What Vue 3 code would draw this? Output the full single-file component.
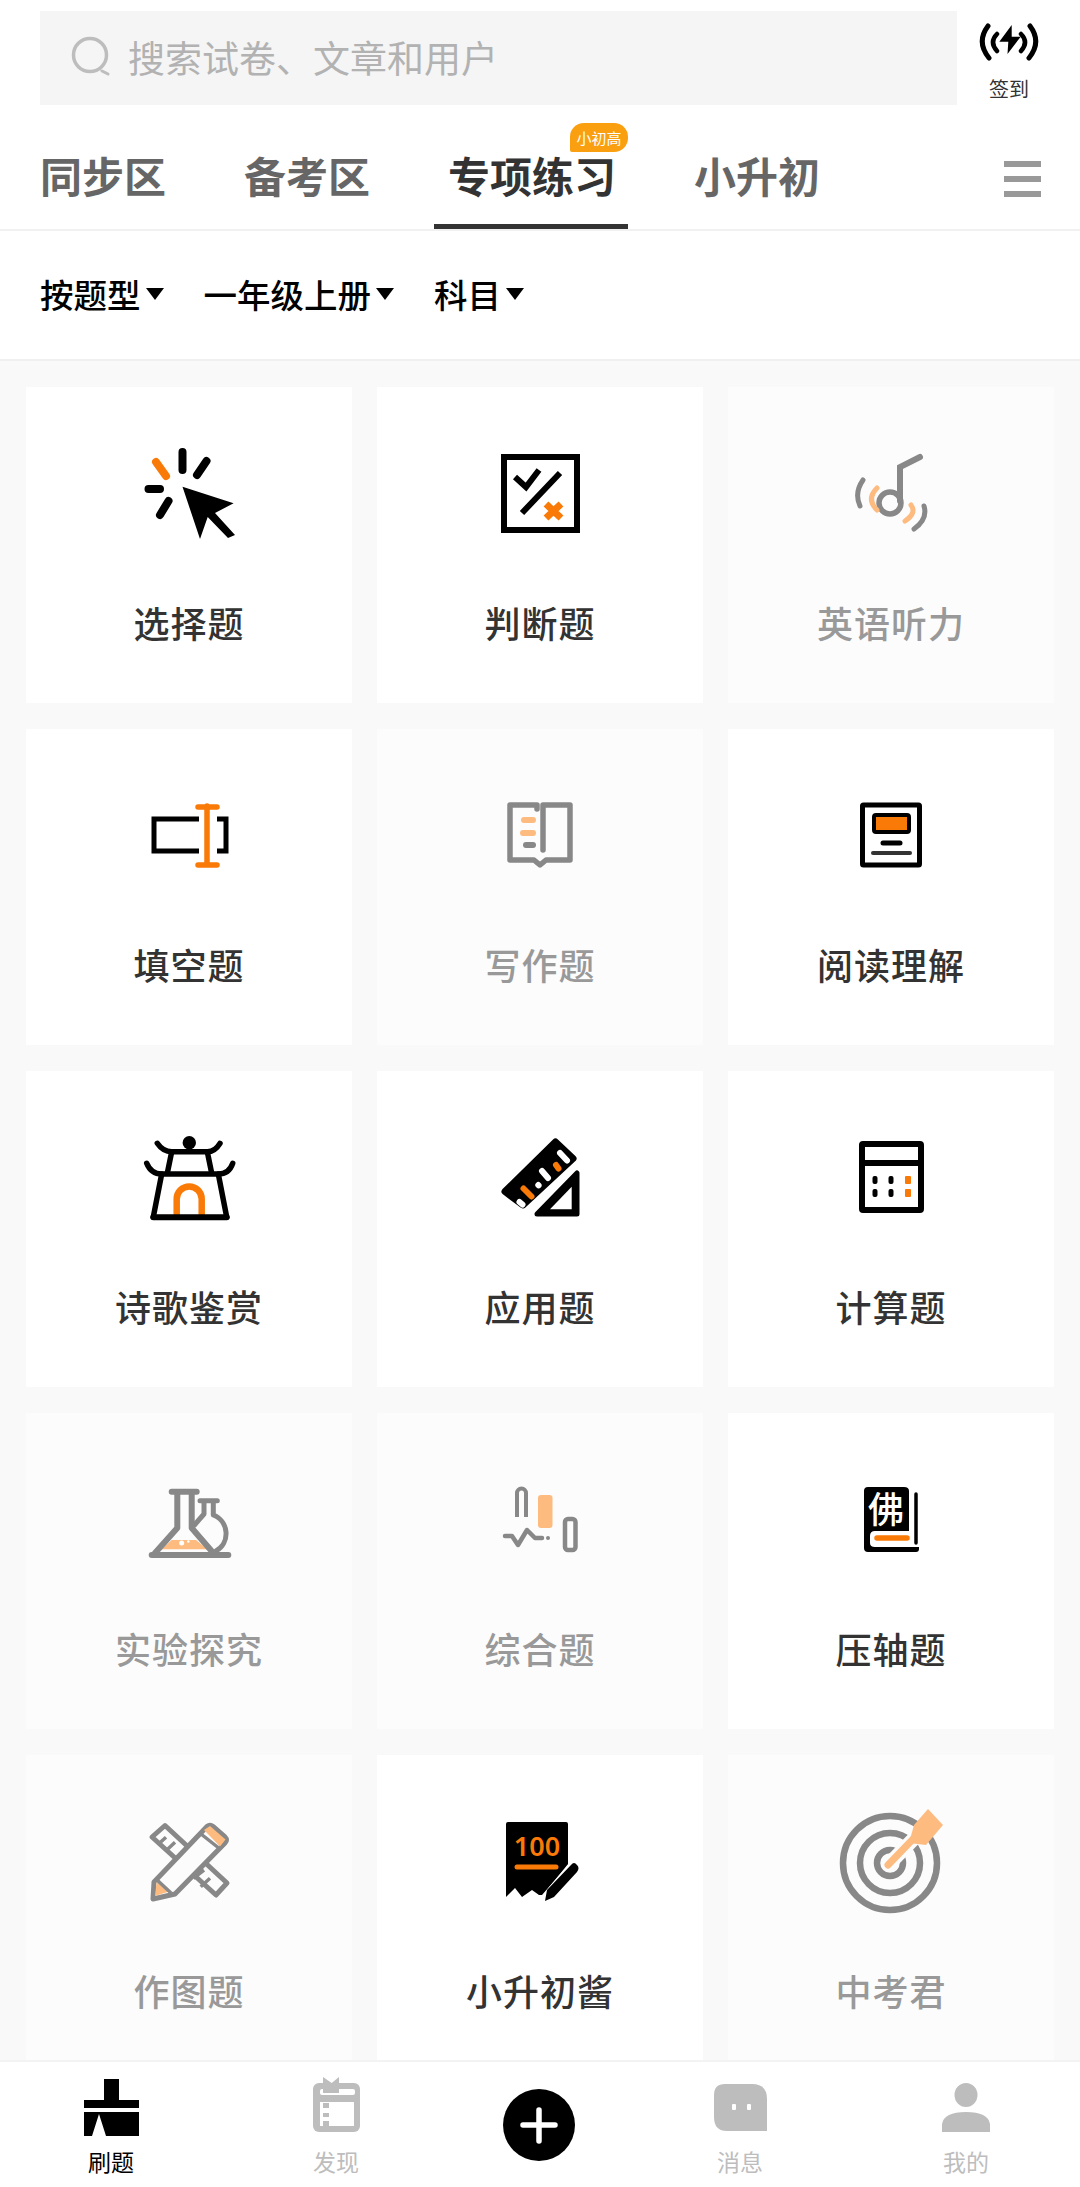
<template>
  <div class="page">
    <header class="search-row">
      <div class="search-box">
        <svg class="search-icon" width="42" height="42" viewBox="0 0 42 42">
          <circle cx="19" cy="19" r="16.5" fill="none" stroke="#bdbdbd" stroke-width="3.5" />
          <path d="M31 35l6 3" fill="none" stroke="#bdbdbd" stroke-width="3" stroke-linecap="round" />
        </svg>
        <span>搜索试卷、文章和用户</span>
      </div>
      <div class="sign-in">
        <svg width="60" height="38" viewBox="0 0 60 38">
          <path d="M9 3Q-3 19 10 35M51 3Q63 19 50 35" fill="none" stroke="#000" stroke-width="5" stroke-linecap="round" />
          <path d="M18 11Q10 19 18 28M42 11Q50 19 42 28" fill="none" stroke="#000" stroke-width="4.5" stroke-linecap="round" />
          <path d="M32.7 2L20.3 18.7H29.3L28.5 31 41.7 13.7H32.7z" fill="#000" />
        </svg>
        <span>签到</span>
      </div>
    </header>

    <nav class="tabs">
      <a class="tab" v-for="tab in tabs" :key="tab.name" :class="{ active: tab.active }">
        {{ tab.name }}
        <i v-if="tab.active" class="badge">小初高</i>
      </a>
      <div class="menu"><b></b><b></b><b></b></div>
    </nav>

    <div class="filters">
      <span class="filter" v-for="f in filters" :key="f">{{ f }}<i class="caret"></i></span>
    </div>

    <main class="content">
      <div class="grid">
        <div class="card">
          <svg class="ico" viewBox="0 0 100 100">
            <path d="M43.5 49.7L94.6 66.3 76 76 96 98 89 101 68.7 80 61 102z" fill="#000" />
            <g fill="none" stroke="#000" stroke-width="8" stroke-linecap="round">
              <path d="M43.5 15V33M67.5 24L58 38M9.5 52H21M29.5 64L21 78" />
              <path d="M17 25L27 39" stroke="#f97a07" />
            </g>
          </svg>
          <span>选择题</span>
        </div>

        <div class="card">
          <svg class="ico" viewBox="0 0 100 100">
            <rect x="14" y="20" width="73" height="73" fill="none" stroke="#000" stroke-width="6" />
            <path d="M25 40L36 50 49 33M70 36L32 76" fill="none" stroke="#000" stroke-width="6" />
            <path d="M56 67L71 81M71 67L56 81" fill="none" stroke="#f97a07" stroke-width="7" />
          </svg>
          <span>判断题</span>
        </div>

        <div class="card off">
          <svg class="ico" viewBox="0 0 100 100">
            <g fill="none" stroke="#888" stroke-linecap="round">
              <circle cx="49" cy="66" r="11" stroke-width="5.5" />
              <path d="M59 64V30L79 20" stroke-width="6" />
              <path d="M22 43Q13 56 19 69M83 69Q87 82 73 92" stroke-width="5" />
            </g>
            <path d="M36 51Q25 62 36 73M70 68Q76 76 64 84" fill="none" stroke="#fdbb80" stroke-width="5" stroke-linecap="round" />
          </svg>
          <span>英语听力</span>
        </div>

        <div class="card">
          <svg class="ico" viewBox="0 0 100 100">
            <path d="M60 40H15V72H60M78 40H87V72H78" fill="none" stroke="#000" stroke-width="5" />
            <path d="M68 27V86M59 28H78M59 86H78" fill="none" stroke="#f97a07" stroke-width="5.5" stroke-linecap="round" />
          </svg>
          <span>填空题</span>
        </div>

        <div class="card off">
          <svg class="ico" viewBox="0 0 100 100">
            <path d="M47 30V26H20V81H44L50 86 56 81H80V26H53V71" fill="none" stroke="#888" stroke-width="5.5" stroke-linejoin="round" stroke-linecap="round" />
            <path d="M34 41H43M33 54H43" stroke="#fdbb80" stroke-width="6" stroke-linecap="round" />
            <path d="M36 66H43" stroke="#888" stroke-width="6" stroke-linecap="round" />
          </svg>
          <span>写作题</span>
        </div>

        <div class="card">
          <svg class="ico" viewBox="0 0 100 100">
            <rect x="21.5" y="26" width="57" height="60" rx="1" fill="none" stroke="#000" stroke-width="5" />
            <rect x="33" y="36" width="35" height="17" rx="2" fill="#f97a07" stroke="#000" stroke-width="4" />
            <path d="M42 64H59" stroke="#000" stroke-width="5" stroke-linecap="round" />
            <path d="M32 74H69" stroke="#333" stroke-width="4" stroke-linecap="round" />
          </svg>
          <span>阅读理解</span>
        </div>

        <div class="card">
          <svg class="ico" viewBox="0 0 100 100">
            <circle cx="50.3" cy="21.7" r="6.7" fill="#000" />
            <g fill="none" stroke="#000" stroke-width="5.5" stroke-linecap="round" stroke-linejoin="round">
              <path d="M18.3 22.3Q24 30.7 32.7 30.7H68.3Q76 30.7 81 22.3" />
              <path d="M32.7 30.7L28.3 52.3M68.3 30.7L72.7 52.3" />
              <path d="M7.7 42.3Q12 53 22.7 53H79.3Q90 53 93.7 42.3" />
              <path d="M22.7 53L14.3 96M79.3 53L87.7 96" />
            </g>
            <path d="M37.7 94V78A12.5 12.5 0 0 1 62.7 78V94" fill="none" stroke="#f97a07" stroke-width="6.5" />
            <path d="M14.3 96.3H87.7" stroke="#000" stroke-width="6" stroke-linecap="round" />
          </svg>
          <span>诗歌鉴赏</span>
        </div>

        <div class="card">
          <svg class="ico" viewBox="0 0 100 100">
            <path d="M65.5 21L83 37.5 33 84 15 70.5z" fill="#000" stroke="#000" stroke-width="7" stroke-linejoin="round" />
            <g stroke-linecap="round" fill="none" stroke-width="6">
              <path d="M70 32L77 39.5M52 50L58 57M48.3 64L48.6 64.3M29.5 81L32.5 83.5" stroke="#fff" />
              <path d="M66 44L68.5 47.5M33.5 67.5L41.5 75.5" stroke="#f97a07" />
            </g>
            <path d="M87 52V93H47z" fill="#000" stroke="#000" stroke-width="5" stroke-linejoin="round" />
            <path d="M81.7 65.7V88.3H60z" fill="#fff" />
          </svg>
          <span>应用题</span>
        </div>

        <div class="card">
          <svg class="ico" viewBox="0 0 100 100">
            <rect x="21" y="23" width="59" height="66" rx="1" fill="none" stroke="#000" stroke-width="6" />
            <path d="M21 42H80" stroke="#000" stroke-width="6" />
            <g fill="#000">
              <rect x="31.5" y="55" width="5" height="8" rx="2" />
              <rect x="47.5" y="55" width="5" height="8" rx="2" />
              <rect x="31.5" y="68" width="5" height="8" rx="2" />
              <rect x="47.5" y="68" width="5" height="8" rx="2" />
            </g>
            <g fill="#f97a07">
              <rect x="64" y="55" width="6" height="8" rx="1" />
              <rect x="64" y="68" width="6" height="8" rx="1" />
            </g>
          </svg>
          <span>计算题</span>
        </div>

        <div class="card off">
          <svg class="ico" viewBox="0 0 100 100">
            <path d="M32.7 77H57L68.3 86.3H22.7z" fill="#fdbb80" />
            <circle cx="42.7" cy="80" r="2.5" fill="#fff" />
            <circle cx="49.3" cy="78.5" r="1.3" fill="#fff" />
            <g fill="none" stroke="#888" stroke-linecap="round" stroke-linejoin="round">
              <path d="M61 37.7H78.3M65 38V51L55.5 62M74.3 38V52A20 20 0 0 1 77 88" stroke-width="5" />
              <path d="M32.7 28.7H57.7M38.3 29V65L16 90M52.7 29V65L74.3 90" stroke-width="6" />
              <path d="M12.7 92H89.3" stroke-width="6" />
            </g>
          </svg>
          <span>实验探究</span>
        </div>

        <div class="card off">
          <svg class="ico" viewBox="0 0 100 100">
            <path d="M27 54V30A4.5 4.5 0 0 1 36 30V54" fill="none" stroke="#888" stroke-width="4" />
            <rect x="48" y="32" width="14.5" height="33" rx="3" fill="#fdbb80" />
            <rect x="75" y="56" width="10.5" height="31" rx="3" fill="none" stroke="#888" stroke-width="4.5" />
            <path d="M15 73H22L28 82 37 67 45 75H52" fill="none" stroke="#888" stroke-width="4.5" stroke-linecap="round" stroke-linejoin="round" />
            <circle cx="58" cy="75" r="2" fill="#888" />
          </svg>
          <span>综合题</span>
        </div>

        <div class="card">
          <svg class="ico" viewBox="0 0 100 100">
            <path d="M27 24H63Q68 24 68 28V68H34Q29 68 29 73V80Q29 84 34 84H78V86Q78 89 75 89H27Q23 89 23 85V28Q23 24 27 24z" fill="#000" />
            <path d="M75 31V80" stroke="#000" stroke-width="3.5" stroke-linecap="round" />
            <path d="M36 75H66" stroke="#f97a07" stroke-width="5.5" stroke-linecap="round" />
            <text x="45" y="60" class="fo">佛</text>
          </svg>
          <span>压轴题</span>
        </div>

        <div class="card off">
          <svg class="ico" viewBox="0 0 100 100">
            <path d="M26 20.5L13 32 77 90 88 78z" fill="none" stroke="#888" stroke-width="5" stroke-linejoin="round" />
            <path d="M20.3 38.3L27 32.3M27 45.7L36 37.3M54.3 73.3L65 65M61.7 81.7L71 73.3" stroke="#888" stroke-width="3.5" />
            <path d="M15 77L68 21.5Q71 19 74 21.5L86 32Q89 35 86 38L36 89 14 94z" fill="#fcfcfc" stroke="#888" stroke-width="5" stroke-linejoin="round" />
            <path d="M65 25L71 21 86.5 34.5 81 41.5z" fill="#fdbb80" />
            <path d="M17.7 76.7L29.3 86.7 16 91z" fill="#fdbb80" />
            <path d="M62 29L81 44M17 74L32 88" fill="none" stroke="#888" stroke-width="3.5" />
          </svg>
          <span>作图题</span>
        </div>

        <div class="card">
          <svg class="ico" viewBox="0 0 100 100">
            <path d="M18 17H76Q78 17 78 19V60L52 90 49 90 42 85 32 92 25 83 16 92V19Q16 17 18 17z" fill="#000" />
            <path d="M83 53L56 86 52 100 94 66z" fill="#fff" />
            <path d="M81 60Q84 56 87 60 90 63 87 67L64 92 55 96 57 85z" fill="#000" />
            <text x="47" y="51" class="score">100</text>
            <path d="M27 62H66" stroke="#f97a07" stroke-width="5" stroke-linecap="round" />
          </svg>
          <span>小升初酱</span>
        </div>

        <div class="card off">
          <svg class="ico" viewBox="0 0 100 100">
            <g fill="none" stroke="#888" stroke-width="6.5">
              <circle cx="49" cy="58" r="47" />
              <circle cx="49" cy="58" r="30" />
              <circle cx="49" cy="58" r="13" />
            </g>
            <path d="M49 58L98 8" stroke="#fcfcfc" stroke-width="14" />
            <path d="M47 60L74 32" stroke="#fdbb80" stroke-width="7" stroke-linecap="round" />
            <path d="M87 4L102 20 85 40 68 38 73 20z" fill="#fdbb80" />
          </svg>
          <span>中考君</span>
        </div>
      </div>
    </main>

    <footer class="bottom-nav">
      <div class="nav-item on">
        <svg width="60" height="60" viewBox="0 0 60 60">
          <path d="M23 2H38V23H58V31H3V23H23zM3 35H58V59H25L18 37 11 59H3z" fill="#000" />
        </svg>
        <span>刷题</span>
      </div>
      <div class="nav-item">
        <svg width="60" height="60" viewBox="0 0 60 60">
          <rect x="7" y="6" width="47" height="49" rx="6" fill="#bdbdbd" />
          <rect x="14" y="12" width="35" height="6" rx="2" fill="#fff" />
          <rect x="14" y="25" width="34" height="24" fill="#fff" />
          <path d="M17 0L25.7 6 33 0V16H17z" fill="#bdbdbd" />
          <path d="M17 26H23V31H17zM17 36H23V40H17zM17 44H23V49H17z" fill="#bdbdbd" />
        </svg>
        <span>发现</span>
      </div>
      <div class="nav-plus">
        <svg width="72" height="72" viewBox="0 0 72 72">
          <circle cx="36" cy="36" r="36" fill="#000" />
          <path d="M36 21V52M20 36H52" stroke="#fff" stroke-width="5.5" stroke-linecap="round" />
        </svg>
      </div>
      <div class="nav-item">
        <svg width="60" height="60" viewBox="0 0 60 60">
          <path d="M15 7H42Q57 7 57 22V54H17Q4 54 4 40V18Q4 7 15 7z" fill="#bdbdbd" />
          <rect x="22" y="27" width="4" height="6" rx="1" fill="#fff" />
          <rect x="37" y="27" width="4" height="6" rx="1" fill="#fff" />
        </svg>
        <span>消息</span>
      </div>
      <div class="nav-item">
        <svg width="60" height="60" viewBox="0 0 60 60">
          <ellipse cx="30" cy="18" rx="11.5" ry="12" fill="#bdbdbd" />
          <path d="M6 55V47Q8 35 30 35 52 35 54 47V55z" fill="#bdbdbd" />
        </svg>
        <span>我的</span>
      </div>
    </footer>
  </div>
</template>

<script setup>
const tabs = [
  { name: '同步区' },
  { name: '备考区' },
  { name: '专项练习', active: true },
  { name: '小升初' },
]

const filters = ['按题型', '一年级上册', '科目']
</script>

<style scoped>
.page {
  display: flex;
  flex-direction: column;
  height: 2187px;
  overflow: hidden;
  background: #fff;
  font-family: "Noto Sans CJK SC", "Noto Sans", sans-serif;
  color: #333;
}

.search-row {
  display: flex;
  height: 105px;
  padding: 11px 0 0 40px;
  box-sizing: border-box;
}

.search-box {
  display: flex;
  align-items: center;
  width: 917px;
  padding: 0 0 2px 31px;
  box-sizing: border-box;
  background: #f5f5f5;
  color: #b2b2b2;
  font-size: 37px;
}

.search-icon {
  margin-right: 15px;
}

.sign-in {
  display: flex;
  flex-direction: column;
  align-items: center;
  width: 104px;
  margin-top: 12px;
  font-size: 20px;
  line-height: 30px;
}

.sign-in span {
  margin-top: 13px;
}

.tabs {
  display: flex;
  position: relative;
  height: 124px;
  padding-left: 40px;
  border-bottom: 2px solid #f1f1f1;
}

.tab {
  position: relative;
  margin-right: 78px;
  height: 124px;
  color: #666;
  font-size: 42px;
  font-weight: 700;
  line-height: 139px;
}

.tab.active {
  color: #333;
}

.tab.active::after {
  content: "";
  position: absolute;
  left: -14px;
  right: -12px;
  bottom: 0;
  height: 5px;
  background: #333;
}

.badge {
  position: absolute;
  top: 18px;
  right: -12px;
  width: 58px;
  height: 29px;
  border-radius: 14px 14px 14px 2px;
  background: #fa9f0f;
  color: #fff;
  font-size: 15px;
  font-style: normal;
  font-weight: 400;
  line-height: 29px;
  text-align: center;
}

.menu {
  position: absolute;
  top: 56px;
  right: 39px;
  display: flex;
  flex-direction: column;
  gap: 9px;
}

.menu b {
  width: 37px;
  height: 6px;
  background: #999;
}

.filters {
  display: flex;
  align-items: center;
  gap: 40px;
  height: 130px;
  padding: 0 0 3px 40px;
  box-sizing: border-box;
  border-bottom: 2px solid #f0f0f0;
  flex-shrink: 0;
}

.filter {
  display: flex;
  align-items: center;
  color: #000;
  font-size: 33.5px;
  font-weight: 500;
}

.caret {
  width: 0;
  height: 0;
  margin-left: 5px;
  border-top: 12px solid #000;
  border-left: 9px solid transparent;
  border-right: 9px solid transparent;
}

.content {
  flex: 1;
  overflow: hidden;
  padding: 26px 26px 0;
  background: #f9f9f9;
}

.grid {
  display: grid;
  grid-template-columns: repeat(3, 326px);
  grid-auto-rows: 316px;
  gap: 26px 25px;
}

.card {
  display: flex;
  flex-direction: column;
  align-items: center;
  padding-top: 50px;
  box-sizing: border-box;
  background: #fff;
  font-size: 36px;
  font-weight: 500;
  letter-spacing: 1px;
  line-height: 50px;
}

.card span {
  margin-top: 60px;
}

.card.off {
  background: #fcfcfc;
  color: #999;
}

.ico {
  width: 100px;
  height: 100px;
  overflow: visible;
}

.fo {
  fill: #fff;
  font-size: 36px;
  font-weight: 500;
  letter-spacing: 0;
  text-anchor: middle;
}

.score {
  fill: #f97a07;
  font-family: "Noto Sans", sans-serif;
  font-size: 27px;
  font-weight: 600;
  letter-spacing: 0;
  text-anchor: middle;
}

.bottom-nav {
  display: grid;
  grid-template-columns: 222px 228px 178px 224px 228px;
  flex-shrink: 0;
  height: 125px;
  border-top: 2px solid #f3f3f3;
  background: #fff;
}

.nav-item {
  display: flex;
  flex-direction: column;
  align-items: center;
  padding-top: 15px;
  color: #bdbdbd;
  font-size: 23px;
  line-height: 30px;
}

.nav-item.on {
  color: #000;
}

.nav-item span {
  margin-top: 9px;
}

.nav-plus {
  display: flex;
  justify-content: center;
  padding-top: 27px;
}
</style>
